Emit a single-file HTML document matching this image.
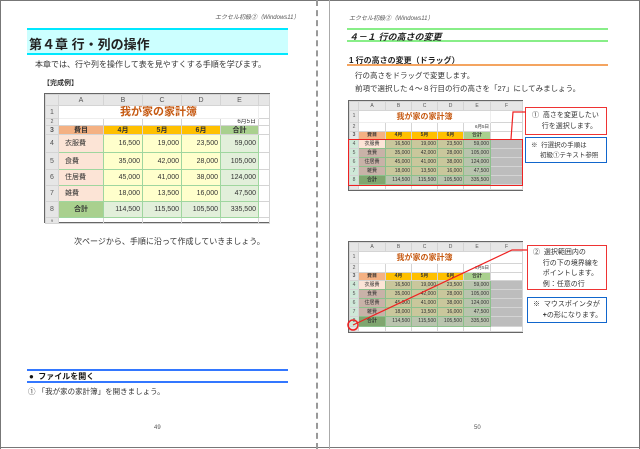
<!DOCTYPE html>
<html><head><meta charset="utf-8"><style>
*{margin:0;padding:0;box-sizing:border-box}
body{width:640px;height:449px;background:#fff;position:relative;overflow:hidden;font-family:"Liberation Sans","Noto Sans CJK JP",sans-serif;color:#333}
.a{position:absolute;white-space:nowrap}
table{border-collapse:collapse;table-layout:fixed;position:absolute}
td{border:1px solid #d4d4d4;padding:0 2px;overflow:hidden;white-space:nowrap;line-height:1}
.L td{font-size:7px}
.R td{font-size:5px;padding:0 1px}
.h td{background:#e6e6e6;text-align:center;color:#555}
td.n{background:#e6e6e6;text-align:center;color:#555}
.g td.b{border-color:#9fd69f}
.r{text-align:right}
.c{text-align:center}
</style></head><body>
<!-- page frames -->
<div class="a" style="left:0;top:0;width:640px;height:1px;background:#777"></div>
<div class="a" style="left:0;top:0;width:1px;height:449px;background:#777"></div>
<div class="a" style="left:639px;top:0;width:1px;height:449px;background:#777"></div>
<div class="a" style="left:0;top:447px;width:640px;height:1px;background:#777"></div>
<div class="a" style="left:316px;top:0;width:0;height:449px;border-left:2px dashed #999"></div>
<div class="a" style="left:329px;top:0;width:1px;height:449px;background:#aaa"></div>

<!-- LEFT PAGE -->
<div class="a" style="left:215px;top:12px;font-size:6px;font-style:italic;color:#555">エクセル初級②（Windows11）</div>
<div class="a" style="left:27px;top:28px;width:261px;height:27px;background:#ccffff;border-top:2px solid #00e8ff;border-bottom:2px solid #00e8ff"></div>
<div class="a" style="left:29px;top:34px;font-size:13px;font-weight:bold;color:#222">第４章 行・列の操作</div>
<div class="a" style="left:35px;top:59px;font-size:8px">本章では、行や列を操作して表を見やすくする手順を学びます。</div>
<div class="a" style="left:43px;top:78px;font-size:7px;font-weight:bold">【完成例】</div>

<div class="a" style="left:44px;top:93px;width:226px;height:130px;border:1px solid #666"></div>
<table class="L" style="left:45px;top:94px;width:224px">
<colgroup><col style="width:13px"><col style="width:45px"><col style="width:39px"><col style="width:39px"><col style="width:39px"><col style="width:38px"><col style="width:11px"></colgroup>
<tr class="h" style="height:11px"><td></td><td>A</td><td>B</td><td>C</td><td>D</td><td>E</td><td></td></tr>
<tr style="height:13px"><td class="n">1</td><td colspan="5" class="c" style="font-size:11px;font-weight:bold;color:#c65911;border-color:#eee">我が家の家計簿</td><td></td></tr>
<tr style="height:7px"><td class="n" style="font-size:5px">2</td><td></td><td></td><td></td><td></td><td class="r" style="font-size:6px">6月5日</td><td></td></tr>
<tr style="height:9px;font-weight:bold"><td class="n">3</td><td class="c" style="background:#f4b183">費目</td><td class="c" style="background:#ffc000">4月</td><td class="c" style="background:#ffc000">5月</td><td class="c" style="background:#ffc000">6月</td><td class="c" style="background:#a9d08e">合計</td><td></td></tr>
<tr style="height:18px"><td class="n">4</td><td style="background:#fce4d6;border-color:#9fd69f;padding-left:6px">衣服費</td><td class="r" style="background:#ffffcc;border-color:#9fd69f">16,500</td><td class="r" style="background:#ffffcc;border-color:#9fd69f">19,000</td><td class="r" style="background:#ffffcc;border-color:#9fd69f">23,500</td><td class="r" style="background:#e2efda;border-color:#9fd69f">59,000</td><td></td></tr>
<tr style="height:17px"><td class="n">5</td><td style="background:#fce4d6;border-color:#9fd69f;padding-left:6px">食費</td><td class="r" style="background:#ffffcc;border-color:#9fd69f">35,000</td><td class="r" style="background:#ffffcc;border-color:#9fd69f">42,000</td><td class="r" style="background:#ffffcc;border-color:#9fd69f">28,000</td><td class="r" style="background:#e2efda;border-color:#9fd69f">105,000</td><td></td></tr>
<tr style="height:16px"><td class="n">6</td><td style="background:#fce4d6;border-color:#9fd69f;padding-left:6px">住居費</td><td class="r" style="background:#ffffcc;border-color:#9fd69f">45,000</td><td class="r" style="background:#ffffcc;border-color:#9fd69f">41,000</td><td class="r" style="background:#ffffcc;border-color:#9fd69f">38,000</td><td class="r" style="background:#e2efda;border-color:#9fd69f">124,000</td><td></td></tr>
<tr style="height:16px"><td class="n">7</td><td style="background:#fce4d6;border-color:#9fd69f;padding-left:6px">雑費</td><td class="r" style="background:#ffffcc;border-color:#9fd69f">18,000</td><td class="r" style="background:#ffffcc;border-color:#9fd69f">13,500</td><td class="r" style="background:#ffffcc;border-color:#9fd69f">16,000</td><td class="r" style="background:#e2efda;border-color:#9fd69f">47,500</td><td></td></tr>
<tr style="height:16px"><td class="n">8</td><td class="c" style="background:#a9d08e;border-color:#9fd69f;font-weight:bold">合計</td><td class="r" style="background:#e2efda;border-color:#9fd69f">114,500</td><td class="r" style="background:#e2efda;border-color:#9fd69f">115,500</td><td class="r" style="background:#e2efda;border-color:#9fd69f">105,500</td><td class="r" style="background:#e2efda;border-color:#9fd69f">335,500</td><td></td></tr>
<tr style="height:6px"><td class="n" style="font-size:4px">9</td><td></td><td></td><td></td><td></td><td></td><td></td></tr>
</table>

<div class="a" style="left:74px;top:236px;font-size:8px">次ページから、手順に沿って作成していきましょう。</div>
<div class="a" style="left:27px;top:369px;width:261px;height:2px;background:#3377ff"></div>
<div class="a" style="left:27px;top:381px;width:261px;height:2px;background:#3377ff"></div>
<div class="a" style="left:29px;top:371px;font-size:8px;font-weight:bold;color:#111">●&nbsp; ファイルを開く</div>
<div class="a" style="left:28px;top:386px;font-size:7.5px">①&nbsp;「我が家の家計簿」を開きましょう。</div>
<div class="a" style="left:154px;top:425px;font-size:6px;color:#555">49</div>

<!-- RIGHT PAGE -->
<div class="a" style="left:349px;top:13px;font-size:6px;font-style:italic;color:#555">エクセル初級②（Windows11）</div>
<div class="a" style="left:347px;top:28px;width:261px;height:2px;background:#88ee88"></div>
<div class="a" style="left:347px;top:40px;width:261px;height:2px;background:#88ee88"></div>
<div class="a" style="left:349px;top:30px;font-size:9px;font-weight:bold;font-style:italic;color:#222">４－１ 行の高さの変更</div>
<div class="a" style="left:349px;top:55px;font-size:8px;font-weight:bold;color:#222">1 行の高さの変更（ドラッグ）</div>
<div class="a" style="left:347px;top:64px;width:261px;height:2px;background:#f4a460"></div>
<div class="a" style="left:355px;top:70px;font-size:7.5px">行の高さをドラッグで変更します。</div>
<div class="a" style="left:355px;top:83px;font-size:7.5px">前項で選択した４～８行目の行の高さを「27」にしてみましょう。</div>

<!-- sheet template used twice -->
<div class="a" style="left:348px;top:100px;width:175px;height:91px;border:1px solid #666;background:#fff"></div>
<table class="R" style="left:349px;top:101px;width:173px">
<colgroup><col style="width:9px"><col style="width:27px"><col style="width:26px"><col style="width:26px"><col style="width:26px"><col style="width:27px"><col style="width:32px"></colgroup>
<tr class="h" style="height:9px"><td></td><td>A</td><td>B</td><td>C</td><td>D</td><td>E</td><td>F</td></tr>
<tr style="height:12px"><td class="n">1</td><td colspan="5" class="c" style="font-size:8px;font-weight:bold;color:#c65911;border-color:#eee">我が家の家計簿</td><td></td></tr>
<tr style="height:9px"><td class="n">2</td><td></td><td></td><td></td><td></td><td class="r" style="font-size:4.5px">6月5日</td><td></td></tr>
<tr style="height:8px;font-weight:bold"><td class="n">3</td><td class="c" style="background:#f4b183">費目</td><td class="c" style="background:#ffc000">4月</td><td class="c" style="background:#ffc000">5月</td><td class="c" style="background:#ffc000">6月</td><td class="c" style="background:#a9d08e">合計</td><td></td></tr>
<tr style="height:9px"><td class="n" style="background:#cfe8d8">4</td><td class="c" style="background:#fce4d6;border-color:#8cc08c">衣服費</td><td class="r" style="background:#c9c79c;border-color:#8cc08c">16,500</td><td class="r" style="background:#c9c79c;border-color:#8cc08c">19,000</td><td class="r" style="background:#c9c79c;border-color:#8cc08c">23,500</td><td class="r" style="background:#b9c4ae;border-color:#8cc08c">59,000</td><td style="background:#bdbdbd"></td></tr>
<tr style="height:9px"><td class="n" style="background:#cfe8d8">5</td><td class="c" style="background:#c8b2a8;border-color:#8cc08c">食費</td><td class="r" style="background:#c9c79c;border-color:#8cc08c">35,000</td><td class="r" style="background:#c9c79c;border-color:#8cc08c">42,000</td><td class="r" style="background:#c9c79c;border-color:#8cc08c">28,000</td><td class="r" style="background:#b9c4ae;border-color:#8cc08c">105,000</td><td style="background:#bdbdbd"></td></tr>
<tr style="height:9px"><td class="n" style="background:#cfe8d8">6</td><td class="c" style="background:#c8b2a8;border-color:#8cc08c">住居費</td><td class="r" style="background:#c9c79c;border-color:#8cc08c">45,000</td><td class="r" style="background:#c9c79c;border-color:#8cc08c">41,000</td><td class="r" style="background:#c9c79c;border-color:#8cc08c">38,000</td><td class="r" style="background:#b9c4ae;border-color:#8cc08c">124,000</td><td style="background:#bdbdbd"></td></tr>
<tr style="height:9px"><td class="n" style="background:#cfe8d8">7</td><td class="c" style="background:#c8b2a8;border-color:#8cc08c">雑費</td><td class="r" style="background:#c9c79c;border-color:#8cc08c">18,000</td><td class="r" style="background:#c9c79c;border-color:#8cc08c">13,500</td><td class="r" style="background:#c9c79c;border-color:#8cc08c">16,000</td><td class="r" style="background:#b9c4ae;border-color:#8cc08c">47,500</td><td style="background:#bdbdbd"></td></tr>
<tr style="height:9px"><td class="n" style="background:#cfe8d8">8</td><td class="c" style="background:#7fa66f;border-color:#8cc08c;font-weight:bold">合計</td><td class="r" style="background:#b9c4ae;border-color:#8cc08c">114,500</td><td class="r" style="background:#b9c4ae;border-color:#8cc08c">115,500</td><td class="r" style="background:#b9c4ae;border-color:#8cc08c">105,500</td><td class="r" style="background:#b9c4ae;border-color:#8cc08c">335,500</td><td style="background:#bdbdbd"></td></tr>
<tr style="height:5px"><td class="n"></td><td></td><td></td><td></td><td></td><td></td><td></td></tr>
</table>
<div class="a" style="left:348px;top:139px;width:175px;height:47px;border:1.5px solid #ee2222"></div>
<div class="a" style="left:525px;top:107px;width:82px;height:28px;border:1.5px solid #ee3333;font-size:7px;line-height:11px;padding:2px 0 0 6px">①&nbsp; 高さを変更したい<br>&nbsp;&nbsp;&nbsp;&nbsp;&nbsp;行を選択します。</div>
<div class="a" style="left:525px;top:137px;width:82px;height:26px;border:1.5px solid #1166cc;font-size:6.5px;line-height:10px;padding:3px 0 0 5px">※&nbsp; 行選択の手順は<br>&nbsp;&nbsp;&nbsp;&nbsp;&nbsp;初級①テキスト参照</div>

<div class="a" style="left:348px;top:241px;width:175px;height:92px;border:1px solid #666;background:#fff"></div>
<table class="R" style="left:349px;top:242px;width:173px">
<colgroup><col style="width:9px"><col style="width:27px"><col style="width:26px"><col style="width:26px"><col style="width:26px"><col style="width:27px"><col style="width:32px"></colgroup>
<tr class="h" style="height:9px"><td></td><td>A</td><td>B</td><td>C</td><td>D</td><td>E</td><td>F</td></tr>
<tr style="height:12px"><td class="n">1</td><td colspan="5" class="c" style="font-size:8px;font-weight:bold;color:#c65911;border-color:#eee">我が家の家計簿</td><td></td></tr>
<tr style="height:9px"><td class="n">2</td><td></td><td></td><td></td><td></td><td class="r" style="font-size:4.5px">6月5日</td><td></td></tr>
<tr style="height:8px;font-weight:bold"><td class="n">3</td><td class="c" style="background:#f4b183">費目</td><td class="c" style="background:#ffc000">4月</td><td class="c" style="background:#ffc000">5月</td><td class="c" style="background:#ffc000">6月</td><td class="c" style="background:#a9d08e">合計</td><td></td></tr>
<tr style="height:9px"><td class="n" style="background:#cfe8d8">4</td><td class="c" style="background:#fce4d6;border-color:#8cc08c">衣服費</td><td class="r" style="background:#c9c79c;border-color:#8cc08c">16,500</td><td class="r" style="background:#c9c79c;border-color:#8cc08c">19,000</td><td class="r" style="background:#c9c79c;border-color:#8cc08c">23,500</td><td class="r" style="background:#b9c4ae;border-color:#8cc08c">59,000</td><td style="background:#bdbdbd"></td></tr>
<tr style="height:9px"><td class="n" style="background:#cfe8d8">5</td><td class="c" style="background:#c8b2a8;border-color:#8cc08c">食費</td><td class="r" style="background:#c9c79c;border-color:#8cc08c">35,000</td><td class="r" style="background:#c9c79c;border-color:#8cc08c">42,000</td><td class="r" style="background:#c9c79c;border-color:#8cc08c">28,000</td><td class="r" style="background:#b9c4ae;border-color:#8cc08c">105,000</td><td style="background:#bdbdbd"></td></tr>
<tr style="height:9px"><td class="n" style="background:#cfe8d8">6</td><td class="c" style="background:#c8b2a8;border-color:#8cc08c">住居費</td><td class="r" style="background:#c9c79c;border-color:#8cc08c">45,000</td><td class="r" style="background:#c9c79c;border-color:#8cc08c">41,000</td><td class="r" style="background:#c9c79c;border-color:#8cc08c">38,000</td><td class="r" style="background:#b9c4ae;border-color:#8cc08c">124,000</td><td style="background:#bdbdbd"></td></tr>
<tr style="height:9px"><td class="n" style="background:#cfe8d8">7</td><td class="c" style="background:#c8b2a8;border-color:#8cc08c">雑費</td><td class="r" style="background:#c9c79c;border-color:#8cc08c">18,000</td><td class="r" style="background:#c9c79c;border-color:#8cc08c">13,500</td><td class="r" style="background:#c9c79c;border-color:#8cc08c">16,000</td><td class="r" style="background:#b9c4ae;border-color:#8cc08c">47,500</td><td style="background:#bdbdbd"></td></tr>
<tr style="height:10px"><td class="n" style="background:#cfe8d8">8</td><td class="c" style="background:#7fa66f;border-color:#8cc08c;font-weight:bold">合計</td><td class="r" style="background:#b9c4ae;border-color:#8cc08c">114,500</td><td class="r" style="background:#b9c4ae;border-color:#8cc08c">115,500</td><td class="r" style="background:#b9c4ae;border-color:#8cc08c">105,500</td><td class="r" style="background:#b9c4ae;border-color:#8cc08c">335,500</td><td style="background:#bdbdbd"></td></tr>
<tr style="height:5px"><td class="n"></td><td></td><td></td><td></td><td></td><td></td><td></td></tr>
</table>
<div class="a" style="left:527px;top:245px;width:80px;height:45px;border:1.5px solid #ee3333;font-size:7px;line-height:10.5px;padding:2px 0 0 5px">②&nbsp; 選択範囲内の<br>&nbsp;&nbsp;&nbsp;&nbsp;&nbsp;行の下の境界線を<br>&nbsp;&nbsp;&nbsp;&nbsp;&nbsp;ポイントします。<br>&nbsp;&nbsp;&nbsp;&nbsp;&nbsp;例：任意の行</div>
<div class="a" style="left:527px;top:297px;width:80px;height:26px;border:1.5px solid #1166cc;font-size:7px;line-height:10.5px;padding:2px 0 0 5px">※&nbsp; マウスポインタが<br>&nbsp;&nbsp;&nbsp;&nbsp;&nbsp;<b>+</b>の形になります。</div>

<svg class="a" style="left:0;top:0" width="640" height="449">
<polyline points="511,139 513,112 526,112" fill="none" stroke="#ee2222" stroke-width="1.2"/>
<polyline points="353,325 512,250 527,250" fill="none" stroke="#ee2222" stroke-width="1.2"/>
<circle cx="353" cy="325" r="5" fill="none" stroke="#ee2222" stroke-width="1.5"/>
</svg>
<div class="a" style="left:474px;top:425px;font-size:6px;color:#555">50</div>
</body></html>
